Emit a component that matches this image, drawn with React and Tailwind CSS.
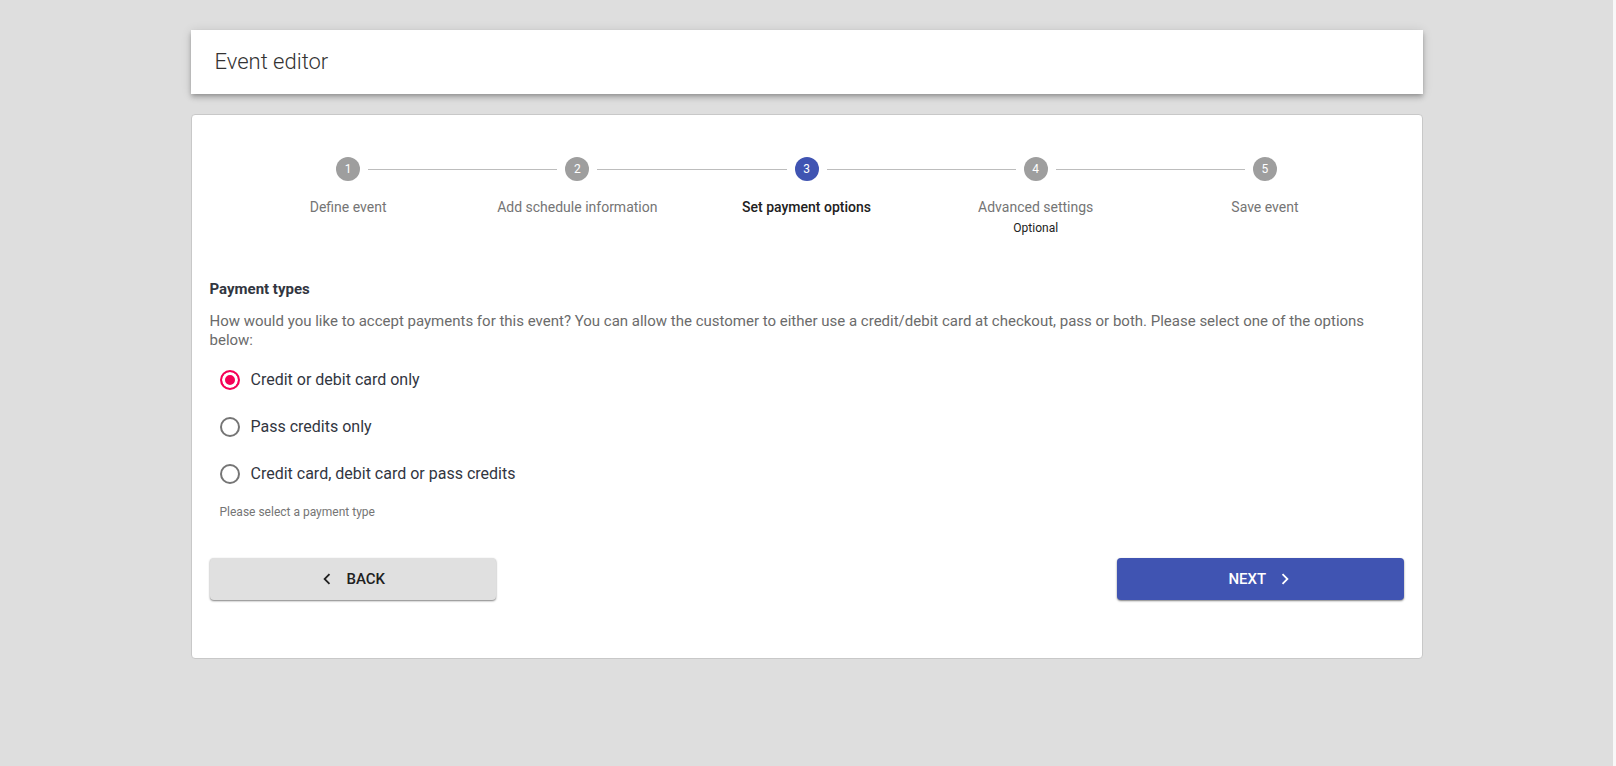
// src/components/EventEditor.jsx

import { useState } from 'react';

const steps = [
  { label: 'Define event' },
  { label: 'Add schedule information' },
  { label: 'Set payment options' },
  { label: 'Advanced settings', optional: true },
  { label: 'Save event' },
];

const paymentTypes = [
  { value: 'card', label: 'Credit or debit card only' },
  { value: 'pass', label: 'Pass credits only' },
  { value: 'both', label: 'Credit card, debit card or pass credits' },
];

const Chevron = ({ d, className }) => (
  <svg
    className={`w-[22px] h-[22px] ${className}`}
    viewBox="0 0 24 24"
    fill="currentColor"
    aria-hidden="true"
  >
    <path d={d} />
  </svg>
);

const Stepper = ({ activeStep }) => (
  <ol className="flex p-6">
    {steps.map((step, index) => (
      <li key={step.label} className="relative flex-1 flex flex-col items-center">
        {/* Connector to the previous step */}
        {index > 0 && (
          <div className="absolute top-3 right-[calc(50%+20px)] left-[calc(-50%+20px)] border-t border-[#bdbdbd]"></div>
        )}
        <div
          className={`w-6 h-6 rounded-full flex items-center justify-center text-xs text-white ${
            index === activeStep ? 'bg-[#4054b2]' : 'bg-[#9e9e9e]'
          }`}
        >
          {index + 1}
        </div>
        <span
          className={`mt-4 text-sm leading-5 ${
            index === activeStep ? 'font-medium text-[#212121]' : 'text-[#757575]'
          }`}
        >
          {step.label}
        </span>
        {step.optional && (
          <span className="text-xs leading-[22px] text-[#212121]">Optional</span>
        )}
      </li>
    ))}
  </ol>
);

const App = () => {
  const [activeStep, setActiveStep] = useState(2);
  const [paymentType, setPaymentType] = useState('card');

  return (
    <div className="min-h-screen bg-[#dedede] border-r-3 border-[#f8f8f8] font-['Roboto',sans-serif] text-[#32363f]">
      <div className="max-w-[1280px] mx-auto px-6 pt-[30px] pb-6">
        <header className="h-16 px-6 pb-0.5 flex items-center bg-white shadow-[0_2px_4px_-1px_rgba(0,0,0,0.2),0_4px_5px_0_rgba(0,0,0,0.14),0_1px_10px_0_rgba(0,0,0,0.12)]">
          <h1 className="text-[22px] font-light text-[#333333]">Event editor</h1>
        </header>

        <main className="mt-5 bg-white border border-[#c8c8c8] rounded px-[18px] pt-[18px] pb-[58px]">
          <Stepper activeStep={activeStep} />

          {/* Payment types */}
          <h2 id="payment-types" className="mt-4 text-[15px] leading-5 font-bold">
            Payment types
          </h2>
          <p className="mt-[13px] text-[15px] leading-[19px] text-[#6b6b6b]">
            How would you like to accept payments for this event? You can allow the customer to
            either use a credit/debit card at checkout, pass or both. Please select one of the
            options below:
          </p>

          <div role="radiogroup" aria-labelledby="payment-types" className="mt-1.5 ml-[10px]">
            {paymentTypes.map((type) => (
              <label key={type.value} className="w-fit h-[47px] flex items-center gap-[11px]">
                <input
                  type="radio"
                  name="paymentType"
                  value={type.value}
                  checked={paymentType === type.value}
                  onChange={() => setPaymentType(type.value)}
                  className="appearance-none w-5 h-5 rounded-full border-2 border-[#757575] checked:border-[#f50057] checked:bg-[#f50057] checked:shadow-[inset_0_0_0_3px_#fff]"
                />
                <span className="text-base">{type.label}</span>
              </label>
            ))}
          </div>
          <p className="mt-[5px] ml-[10px] text-xs leading-5 text-[#757575]">
            Please select a payment type
          </p>

          {/* Navigation */}
          <div className="mt-9 grid grid-cols-4 gap-4">
            <button
              onClick={() => setActiveStep(Math.max(activeStep - 1, 0))}
              className="h-[42px] flex items-center justify-center gap-2 rounded bg-[#e0e0e0] text-[15px] font-medium text-[#212121] shadow-[0_1px_2px_rgba(0,0,0,0.5)]"
            >
              <Chevron className="-ml-1" d="M15.41 7.41L14 6l-6 6 6 6 1.41-1.41L10.83 12z" />
              BACK
            </button>
            <button
              onClick={() => setActiveStep(Math.min(activeStep + 1, steps.length - 1))}
              className="col-start-4 h-[42px] flex items-center justify-center gap-2 rounded bg-[#4054b2] text-[15px] font-medium text-white shadow-[0_1px_2px_rgba(0,0,0,0.5)]"
            >
              NEXT
              <Chevron className="-mr-1" d="M10 6L8.59 7.41 13.17 12l-4.58 4.59L10 18l6-6z" />
            </button>
          </div>
        </main>
      </div>
    </div>
  );
};

export default App;
